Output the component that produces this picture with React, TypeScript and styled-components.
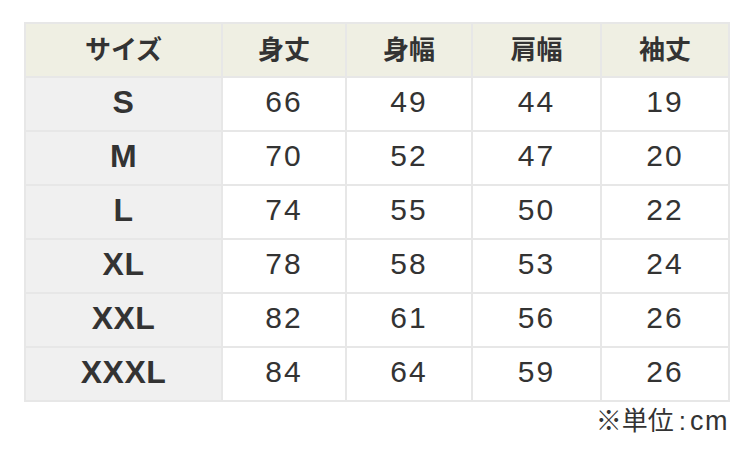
import React from "react";
import styled, { createGlobalStyle } from "styled-components";

const Global = createGlobalStyle`
  html, body { margin: 0; padding: 0; background: #ffffff; }
  body { font-family: "Liberation Sans", "Noto Sans CJK JP", sans-serif; color: #333333; }
`;

const Page = styled.div`
  padding: 22px 0 0 24px;
  width: 706px;
`;

const Grid = styled.div`
  display: grid;
  grid-template-columns: 195px 122px 124px 127px 126px;
  grid-auto-rows: 52px;
  gap: 2px;
  padding: 2px;
  background: #e7e7e7;
`;

const HeadCell = styled.div`
  background: #efefe3;
  display: flex;
  align-items: center;
  justify-content: center;
  font-family: "Noto Sans CJK JP", sans-serif;
  font-weight: 700;
  font-size: 26px;
  color: #333333;
  padding-bottom: 6px;
`;

const SizeCell = styled.div`
  background: #f0f0f0;
  display: flex;
  align-items: center;
  justify-content: center;
  font-family: "Liberation Sans", sans-serif;
  font-weight: 700;
  font-size: 32px;
  color: #333333;
  letter-spacing: 0.5px;
  padding-bottom: 4px;
`;

const ValueCell = styled.div`
  background: #ffffff;
  display: flex;
  align-items: center;
  justify-content: center;
  font-family: "Liberation Sans", sans-serif;
  font-size: 30px;
  color: #333333;
  letter-spacing: 2px;
  padding-bottom: 4px;
`;

const Note = styled.div`
  text-align: right;
  margin-top: -2px;
  padding-right: 1px;
  font-family: "Liberation Sans", "Noto Sans CJK JP", sans-serif;
  font-size: 26px;
  color: #333333;
`;

const Unit = styled.span`
  font-size: 27px;
  letter-spacing: 1.5px;
`;

const Colon = styled.span`
  margin: 0 4px 0 5px;
`;

const headers = ["サイズ", "身丈", "身幅", "肩幅", "袖丈"];
const rows: [string, number[]][] = [
  ["S", [66, 49, 44, 19]],
  ["M", [70, 52, 47, 20]],
  ["L", [74, 55, 50, 22]],
  ["XL", [78, 58, 53, 24]],
  ["XXL", [82, 61, 56, 26]],
  ["XXXL", [84, 64, 59, 26]],
];

export default function App() {
  return (
    <>
      <Global />
      <Page>
        <Grid>
          {headers.map((h) => (
            <HeadCell key={h}>{h}</HeadCell>
          ))}
          {rows.map(([size, vals]) => (
            <React.Fragment key={size}>
              <SizeCell>{size}</SizeCell>
              {vals.map((v, i) => (
                <ValueCell key={i}>{v}</ValueCell>
              ))}
            </React.Fragment>
          ))}
        </Grid>
        <Note>
          ※単位<Colon>:</Colon>
          <Unit>cm</Unit>
        </Note>
      </Page>
    </>
  );
}
